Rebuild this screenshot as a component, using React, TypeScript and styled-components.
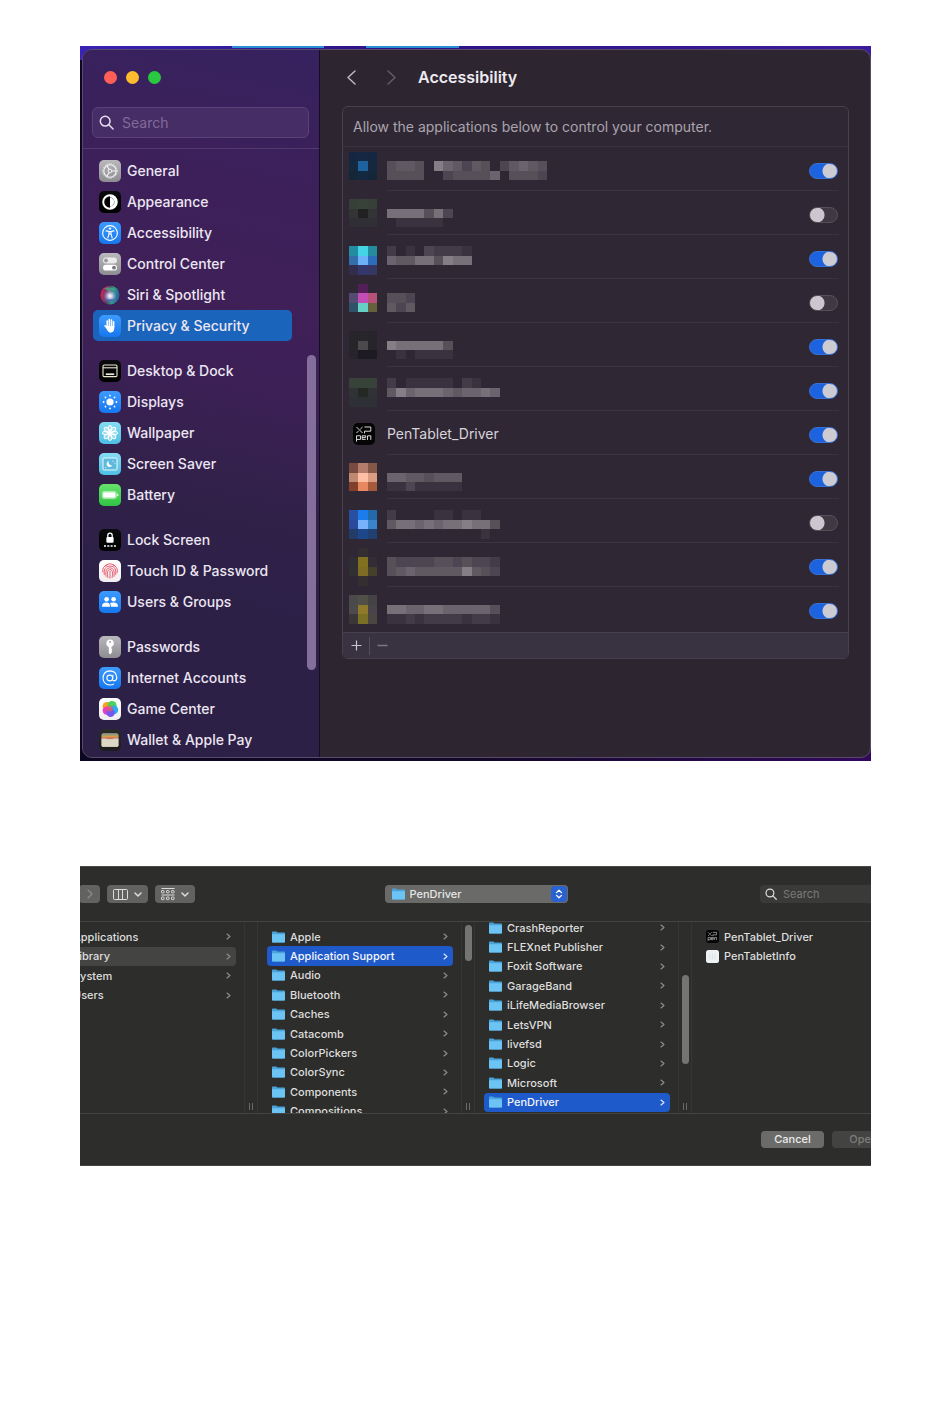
import React from "react";
import styled, { createGlobalStyle, css } from "styled-components";

const GlobalStyle = createGlobalStyle`
  *, *::before, *::after { box-sizing: border-box; }
  body {
    margin: 0;
    background: #fff;
    font-family: Inter, "Liberation Sans", sans-serif;
    -webkit-font-smoothing: antialiased;
  }
  button, input, select { font: inherit; color: inherit; }
  ul { list-style: none; margin: 0; padding: 0; }
`;

const Page = styled.main`
  padding: 46px 79px 253px 80px;
  display: flex;
  flex-direction: column;
  gap: 105px;
`;

/* ---------- System settings window ---------- */

const Desktop = styled.section`
  padding: 3px 0 3px 2px;
  background:
    linear-gradient(90deg, transparent 152px, #2a8fd0 152px 244px, transparent 244px 286px, #2a8fd0 286px 379px, transparent 379px) 0 0 / 100% 2px no-repeat,
    linear-gradient(90deg, #3a22b4, #2c1382 40%, #3c1c9c) 0 0 / 100% 14px no-repeat,
    linear-gradient(90deg, #0c0620, #120828 50%, #32085c);
`;

const SettingsWindow = styled.div`
  display: flex;
  border: 1px solid #594a6c;
  border-radius: 10px;
  overflow: hidden;
  background: #2d2631;
`;

const Sidebar = styled.aside`
  flex: none;
  width: 237px;
  border-right: 1px solid #150e22;
  background: linear-gradient(192deg, #36225f 0%, #3c205a 18%, #3f2058 34%, #3c2056 46%, #312149 62%, #2c2047 76%, #2d2046 100%);
`;

const TrafficLights = styled.div`
  display: flex;
  gap: 9px;
  padding: 21px 21px 23px;
`;

const Light = styled.button<{ $color: string }>`
  width: 13px;
  height: 13px;
  padding: 0;
  border: 0;
  border-radius: 50%;
  background: ${(p) => p.$color};
`;

const SidebarSearch = styled.label`
  display: flex;
  align-items: center;
  gap: 8px;
  height: 31px;
  margin: 0 10px 10px 9px;
  padding: 0 6px;
  border: 1px solid #584276;
  border-radius: 6px;
  background: #472d66;
  color: #e6dcf0;

  input {
    flex: 1;
    min-width: 0;
    padding: 0;
    border: 0;
    outline: 0;
    background: none;
    font-size: 14px;
  }
  input::placeholder { color: #806b98; opacity: 1; }
`;

const SidebarBody = styled.div`
  display: flex;
  border-top: 1px solid #513a6c;
  padding-top: 6px;
`;

const Nav = styled.nav`
  flex: 1;
  display: flex;
  flex-direction: column;
  gap: 14px;
  margin: 0 15px 2px 10px;
`;

const NavLink = styled.a<{ $active?: boolean }>`
  display: flex;
  align-items: center;
  gap: 6px;
  height: 31px;
  padding: 0 6px;
  border-radius: 5px;
  color: #ece6f2;
  font-size: 14px;
  font-weight: 500;
  white-space: nowrap;
  text-decoration: none;
  ${(p) => p.$active && css`background: #1a64bc;`}
`;

const SidebarThumb = styled.div`
  width: 9px;
  height: 315px;
  margin: 200px 3px 0 0;
  border-radius: 5px;
  background: #846e9c;
`;

const Pane = styled.section`
  flex: 1;
  min-width: 0;
  padding: 0 21px 0 22px;
`;

const PaneHeader = styled.header`
  display: flex;
  align-items: center;
  height: 54px;
  margin-bottom: 2px;
`;

const HistoryButton = styled.button<{ $dim?: boolean }>`
  display: grid;
  place-items: center;
  width: 18px;
  height: 24px;
  margin-right: 22px;
  padding: 0;
  border: 0;
  background: none;
  color: ${(p) => (p.$dim ? "#645d69" : "#bdb7c2")};
`;

const PaneTitle = styled.h1`
  margin: 0 0 0 -4px;
  color: #eeeaf1;
  font-size: 16px;
  font-weight: 600;
`;

const Card = styled.div`
  border: 1px solid #48414d;
  border-radius: 6px;
  overflow: hidden;
  background: #2f2834;
`;

const CardIntro = styled.p`
  display: flex;
  align-items: center;
  height: 40px;
  margin: 0;
  padding: 0 10px 1px;
  border-bottom: 1px solid #3a333f;
  color: #aaa4af;
  font-size: 14px;
`;

const AppList = styled.ul`
  padding-bottom: 1px;
`;

const AppRow = styled.li`
  display: flex;
  justify-content: space-between;
  height: 44px;
  margin: 0 9px 0 44px;
  border-bottom: 1px solid #3b3440;
  &:last-child { border-bottom-color: transparent; }
`;

const AppIdentity = styled.span`
  display: flex;
  align-items: center;
  gap: 12px;
  margin-left: -44px;
  padding: 2px 0 0 10px;
  color: #d8d3dc;
  font-size: 14px;
`;

const Mosaic = styled.svg`
  display: block;
  flex: none;
  margin-left: -44px;
`;

const Switch = styled.input`
  appearance: none;
  flex: none;
  width: 29px;
  height: 16px;
  margin: 16px 1px 0 0;
  border: 1px solid #55505a;
  border-radius: 8px;
  background: radial-gradient(circle at 7px 50%, #cdc6ce 7px, transparent 8px) #3f3944;
  &:checked {
    border-color: #3a70d0;
    background: radial-gradient(circle at 20px 50%, #cccbd2 7px, transparent 8px) #1d63e0;
  }
`;

const CardFooter = styled.div`
  display: flex;
  align-items: center;
  height: 26px;
  border-top: 1px solid #48414d;
  background: #393240;
`;

const FooterButton = styled.button<{ $dim?: boolean }>`
  display: grid;
  place-items: center;
  width: 26px;
  height: 18px;
  padding: 0;
  border: 0;
  background: none;
  color: ${(p) => (p.$dim ? "#7d7683" : "#c9c4cd")};
  & + & { border-left: 1px solid #544d5a; }
`;

/* ---------- Open dialog ---------- */

const DialogClip = styled.section`
  overflow: hidden;
  border-top: 1px solid #4b4b4a;
  border-bottom: 1px solid #454544;
  background: #2d2d2c;
  color: #dededd;
  font-size: 11px;
`;

/* The sheet is wider than its crop on both sides. */
const Sheet = styled.div`
  margin: 0 -40px 0 -39px;
`;

const Toolbar = styled.div`
  display: grid;
  grid-template-columns: 1fr 183px 1fr;
  align-items: center;
  height: 54px;
  padding: 0 16px;
`;

const ToolGroup = styled.div`
  display: flex;
  gap: 7px;
`;

const ToolButton = styled.button<{ $w: number }>`
  display: flex;
  align-items: center;
  justify-content: center;
  gap: 6px;
  width: ${(p) => p.$w}px;
  height: 18px;
  padding: 0;
  border: 0;
  border-radius: 4px;
  background: #626261;
  color: #dcdcdb;
`;

const NavPair = styled.div`
  display: flex;
  gap: 1px;
  color: #8d8d8c;
  button { color: inherit; }
`;

const PathPicker = styled.label`
  display: flex;
  align-items: center;
  gap: 5px;
  height: 18px;
  padding: 0 1px 0 7px;
  border-radius: 4px;
  background: #6a6a69;

  select {
    flex: 1;
    min-width: 0;
    appearance: none;
    padding: 0;
    border: 0;
    outline: 0;
    background: none;
    color: #e6e6e5;
    font-weight: 500;
  }
`;

const Stepper = styled.span`
  display: grid;
  place-items: center;
  width: 16px;
  height: 16px;
  border-radius: 4px;
  background: #2a62d2;
  color: #fff;
`;

const DialogSearch = styled.label`
  display: flex;
  align-items: center;
  justify-self: end;
  gap: 6px;
  width: 135px;
  height: 18px;
  padding: 0 5px;
  border-radius: 4px;
  background: #3a3a39;

  input {
    flex: 1;
    min-width: 0;
    padding: 0;
    border: 0;
    outline: 0;
    background: none;
  }
  input::placeholder { color: #7b7b7a; opacity: 1; }
`;

const Columns = styled.div`
  display: flex;
  height: 193px;
  overflow: hidden;
  border-top: 1px solid #444443;
  border-bottom: 1px solid #444443;
`;

const Column = styled.div<{ $last?: boolean }>`
  display: flex;
  flex: none;
  width: 217px;
  ${(p) => p.$last && css`flex: 1;`}
`;

const FileList = styled.ul<{ $height: number; $scrolled?: boolean }>`
  display: grid;
  grid-auto-rows: 1fr;
  flex: 1;
  align-self: flex-start;
  height: ${(p) => p.$height}px;
  margin: ${(p) => (p.$scrolled ? "-4px" : "5px")} 8px 0 9px;
`;

const FileRow = styled.li<{ $state?: "active" | "trail" }>`
  display: flex;
  align-items: center;
  gap: 5px;
  padding: 0 5px;
  border-radius: 4px;
  font-weight: 500;
  white-space: nowrap;
  color: #dededd;
  svg:last-child { margin-left: auto; color: #8f8f8e; }
  ${(p) => p.$state === "trail" && css`background: #444443;`}
  ${(p) =>
    p.$state === "active" &&
    css`
      background: #1f5acb;
      color: #f4f6fb;
      svg:last-child { color: #dfe8fa; }
    `}
`;

const Gutter = styled.div`
  display: flex;
  flex-direction: column;
  justify-content: space-between;
  align-items: center;
  width: 14px;
  padding-bottom: 3px;
  border-left: 1px solid #363635;
  border-right: 1px solid #363635;
  color: #6a6a69;
`;

const Thumb = styled.div<{ $top: number; $height: number }>`
  width: 7px;
  height: ${(p) => p.$height}px;
  margin-top: ${(p) => p.$top}px;
  border-radius: 4px;
  background: #747473;
`;

const DialogActions = styled.div`
  display: flex;
  justify-content: flex-end;
  gap: 8px;
  padding: 17px 16px;
`;

const ActionButton = styled.button`
  width: 63px;
  height: 17px;
  padding: 0;
  border: 0;
  border-radius: 4px;
  background: #6b6b6a;
  color: #ececeb;
  font-weight: 500;
  line-height: 17px;
  &:disabled { background: #434342; color: #7d7d7c; }
`;

/* ---------- Icons ---------- */

const Chevron = ({ w, h, left, down, stroke = 1.5 }: { w: number; h: number; left?: boolean; down?: boolean; stroke?: number }) => (
  <svg width={w} height={h} fill="none" stroke="currentColor" strokeWidth={stroke} strokeLinecap="round" strokeLinejoin="round" aria-hidden="true">
    {down ? (
      <path d={`M1 1L${w / 2} ${h - 1}L${w - 1} 1`} />
    ) : left ? (
      <path d={`M${w - 1} 1L1 ${h / 2}L${w - 1} ${h - 1}`} />
    ) : (
      <path d={`M1 1L${w - 1} ${h / 2}L1 ${h - 1}`} />
    )}
  </svg>
);

const Magnifier = ({ size }: { size: number }) => (
  <svg width={size} height={size} viewBox="0 0 16 16" fill="none" stroke="currentColor" strokeWidth="1.6" strokeLinecap="round" aria-hidden="true">
    <circle cx="6.6" cy="6.6" r="5.2" />
    <path d="M10.5 10.5L15 15" />
  </svg>
);

const Folder = () => (
  <svg width="13" height="12" viewBox="0 0 13 12" aria-hidden="true">
    <path d="M0 1.2Q0 .4 .8 .4H4.2L5.4 1.6H12.2Q13 1.6 13 2.4V10.8Q13 11.6 12.2 11.6H.8Q0 11.6 0 10.8Z" fill="#4aa3d8" />
    <path d="M0 3.2H13V10.8Q13 11.6 12.2 11.6H.8Q0 11.6 0 10.8Z" fill="#6cc4f4" />
  </svg>
);

const PenIcon = ({ size }: { size: number }) => (
  <svg width={size} height={size} viewBox="0 0 22 22" aria-hidden="true">
    <rect width="22" height="22" rx="5" fill="#050505" />
    <g fill="none" stroke="#e4e4e4" strokeWidth=".95">
      <path d="M3.5 4L9.5 10M9.5 4L7.3 6.2M5.7 7.8L3.5 10" />
      <path d="M11.5 4H17.8V8.2H11.5V10.4" />
      <path d="M3.5 18.6V12.8H7.5V16.4H3.5" />
      <path d="M9.2 14.6H12.7V12.8H9.2V16.4H12.7" />
      <path d="M14.5 16.9V12.8H17.8V16.9" />
    </g>
  </svg>
);

const DocIcon = () => (
  <svg width="13" height="13" aria-hidden="true">
    <rect width="13" height="13" rx="2.5" fill="#eef2f4" />
    <path d="M4 3.5V9.5M6.5 3.5V9.5M9 3.5V9.5" stroke="#dbe4e8" />
  </svg>
);

const GripLines = () => (
  <svg width="6" height="7" stroke="currentColor" aria-hidden="true">
    <path d="M1.5 0V7M4.5 0V7" />
  </svg>
);

const tiles: Record<string, [string, string]> = {
  grey: ["#b9b8bc", "#8d8c91"],
  black: ["#0b0a0c", "#000"],
  blue: ["#3d9bff", "#1677ee"],
  cyan: ["#86dcf2", "#4dbfe4"],
  green: ["#67e26c", "#30c444"],
  white: ["#fff", "#f0eef0"],
  dark: ["#2a2a2a", "#1c1c1c"],
  none: ["transparent", "transparent"],
};

const TileSvg = styled.svg`
  flex: none;
  overflow: visible;
`;

const Tile = ({ id, tone, children }: { id: string; tone: string; children: React.ReactNode }) => (
  <TileSvg width="22" height="22" viewBox="0 0 22 22" fill="none" stroke="none" aria-hidden="true">
    <defs>
      <linearGradient id={`t-${id}`} x1="0" y1="0" x2="0" y2="1">
        <stop stopColor={tiles[tone][0]} />
        <stop offset="1" stopColor={tiles[tone][1]} />
      </linearGradient>
    </defs>
    <rect width="22" height="22" rx="5" fill={`url(#t-${id})`} />
    {children}
  </TileSvg>
);

const spokes = (n: number) => Array.from({ length: n }, (_, i) => (360 / n) * i);

const glyphs: Record<string, [string, React.ReactNode]> = {
  general: ["grey", (
    <g stroke="#f2f2f4">
      <circle cx="11" cy="11" r="6.2" strokeWidth="1.1" />
      <circle cx="11" cy="11" r="7.2" strokeWidth="1" strokeDasharray="1.2 1.1" />
      <circle cx="11" cy="11" r="1.8" />
      <path d="M13 11H17.2M10 9.3L7.9 5.7M10 12.7L7.9 16.3" strokeWidth="1.2" />
    </g>
  )],
  appearance: ["black", (
    <>
      <circle cx="11" cy="11" r="6.8" stroke="#fff" strokeWidth="2" />
      <path d="M11 4A7 7 0 0 1 11 18V15.4A4.4 4.4 0 0 0 11 6.6Z" fill="#fff" />
      <path d="M11 6.8A4.2 4.2 0 0 0 11 15.2Z" fill="#000" />
      <path d="M11 6.8A4.2 4.2 0 0 1 11 15.2Z" fill="#fff" />
    </>
  )],
  accessibility: ["blue", (
    <>
      <circle cx="11" cy="11" r="7.4" stroke="#fff" strokeWidth="1.1" />
      <circle cx="11" cy="6.6" r="1.2" fill="#fff" />
      <path d="M7 8.9L10 9.5V12L8.8 16M15 8.9L12 9.5V12L13.2 16M10 9.6H12M10 12H12" stroke="#fff" strokeWidth="1.1" strokeLinecap="round" />
    </>
  )],
  control: ["grey", (
    <>
      <rect x="4" y="4.6" width="14" height="5.8" rx="2.9" fill="#fff" opacity=".75" />
      <circle cx="7" cy="7.5" r="1.9" fill="#98979c" />
      <rect x="4" y="11.8" width="14" height="5.8" rx="2.9" fill="#fff" />
      <circle cx="15" cy="14.7" r="1.9" fill="#77767b" />
    </>
  )],
  siri: ["none", (
    <>
      <defs>
        <radialGradient id="siri-core">
          <stop stopColor="#fff" />
          <stop offset=".35" stopColor="#d9d4f2" stopOpacity=".85" />
          <stop offset="1" stopColor="#6a7cc0" stopOpacity="0" />
        </radialGradient>
        <linearGradient id="siri-ring" x1="0" y1=".4" x2="1" y2=".6">
          <stop stopColor="#d02455" />
          <stop offset=".4" stopColor="#5f3f66" />
          <stop offset=".65" stopColor="#2f9a88" />
          <stop offset="1" stopColor="#2c58a8" />
        </linearGradient>
      </defs>
      <circle cx="11" cy="11" r="10.2" fill="#3a1c4a" />
      <circle cx="11" cy="11" r="9.6" fill="url(#siri-ring)" />
      <path d="M4 5Q11 1 17 6Q12 5 10 8Q6 4 4 5Z" fill="#49b58c" opacity=".7" />
      <circle cx="11" cy="12" r="7" fill="url(#siri-core)" />
      <path d="M5 15.5Q11 19.5 17 15Q12 15 5 15.5Z" fill="#4667bb" opacity=".8" />
    </>
  )],
  privacy: ["blue", (
    <g stroke="#fff" strokeLinecap="round" strokeWidth="1.6">
      <path d="M8.2 12V6M10.3 11V4.6M12.5 11V5M14.6 12V6.8M8.2 13.2L6 10.8" />
      <path d="M8 11.5H14.8V13.6Q14.8 17.2 11.6 17.2Q9.4 17.2 8.2 14.4Z" fill="#fff" strokeWidth="1" />
    </g>
  )],
  desktop: ["black", (
    <g stroke="#e9e8d2" strokeWidth="1.1">
      <rect x="4" y="5" width="14" height="11.6" rx="1.2" />
      <path d="M4 7.8H18" />
      <path d="M6.8 14.2H15.2" strokeWidth="1.7" />
    </g>
  )],
  displays: ["blue", (
    <g fill="#fff">
      <circle cx="11" cy="11" r="3.6" />
      {spokes(8).map((a) => <circle key={a} cx="11" cy="4.6" r=".9" transform={`rotate(${a} 11 11)`} />)}
    </g>
  )],
  wallpaper: ["cyan", (
    <g stroke="#fff" strokeWidth="1" fill="#fff" fillOpacity=".35">
      {spokes(8).map((a) => <ellipse key={a} cx="11" cy="6.4" rx="1.9" ry="2.9" transform={`rotate(${a} 11 11)`} />)}
      <circle cx="11" cy="11" r="1.6" fillOpacity="1" />
    </g>
  )],
  saver: ["cyan", (
    <>
      <rect x="4" y="5" width="14" height="12" rx="1" fill="#5fb9dc" stroke="#e8fafd" strokeWidth="1" />
      <path d="M9.6 8A3.1 3.1 0 1 0 13.4 12.4A3.4 3.4 0 0 1 9.6 8Z" fill="#fff" />
      <path d="M13.5 8.2H14.5M15.5 10.4H16.3M6.3 14.6H7.2" stroke="#fff" />
    </>
  )],
  battery: ["green", (
    <>
      <rect x="3.2" y="7.4" width="14.2" height="7.2" rx="2" stroke="#d8fbd8" strokeWidth=".7" />
      <rect x="4" y="8.2" width="12.6" height="5.6" rx="1.2" fill="#fff" />
      <path d="M18.6 9.8Q19.8 11 18.6 12.2Z" fill="#fff" stroke="#fff" strokeWidth=".6" />
    </>
  )],
  lock: ["black", (
    <>
      <rect x="7.4" y="8" width="7.2" height="5.8" rx="1" fill="#fff" />
      <path d="M8.8 8.4V6.4A2.2 2.2 0 0 1 13.2 6.4V8.4" stroke="#fff" strokeWidth="1.3" />
      <path d="M5 17H7M8.3 17H10.3M11.6 17H13.6M14.9 17H16.9" stroke="#fff" strokeWidth="1.5" />
    </>
  )],
  touch: ["white", (
    <g stroke="#e8596b" strokeWidth=".95" strokeLinecap="round">
      <path d="M5.4 6.4Q11 .8 16.6 6.4" />
      <path d="M3.8 12Q3 6.2 8 4.9M18.2 12.6Q19.4 6.6 14 4.9" />
      <path d="M5.2 14.6Q4.2 6 11 6Q17.8 6 16.8 14.6" />
      <path d="M7 16.4Q5.6 7.8 11 7.8Q16.4 7.8 15 16.4" />
      <path d="M8.9 17.6Q7.2 9.6 11 9.6Q14.8 9.6 13.1 17.6" />
      <path d="M11 11.4V18.2" />
    </g>
  )],
  users: ["blue", (
    <g fill="#fff">
      <circle cx="7.6" cy="8.2" r="2.3" />
      <circle cx="14.6" cy="8.2" r="2.3" />
      <path d="M3 15.8Q3 11.6 7.4 11.6Q11 11.6 11 15.8Z" />
      <path d="M11.9 15.8Q11.9 13 10.9 12.2Q12.2 11.6 14.6 11.6Q19 11.6 19 15.8Z" />
    </g>
  )],
  passwords: ["grey", (
    <g fill="#fff">
      <path fillRule="evenodd" d="M11 3.4A3.9 3.9 0 0 1 12.4 10.9V12.4L13.4 13.4L12.4 14.4L13.4 15.5L11.2 18.4L9.8 17V10.9A3.9 3.9 0 0 1 11 3.4ZM11 4.9A1.1 1.1 0 1 0 11 7.1A1.1 1.1 0 1 0 11 4.9Z" />
    </g>
  )],
  internet: ["blue", (
    <g stroke="#fff" strokeWidth="1.1" strokeLinecap="round">
      <circle cx="10.8" cy="11" r="2.9" />
      <path d="M13.9 8.2L13.5 12.2Q13.6 13.9 15 13.9Q17.8 13.6 17.8 10.6Q17.2 4 11 3.9Q4.4 4.2 4 11Q4.4 17.7 11 18Q13.2 18 14.6 17.1" />
    </g>
  )],
  game: ["white", (
    <>
      <circle cx="8" cy="8.4" r="4.4" fill="#f9a01f" />
      <circle cx="13" cy="7.6" r="4.6" fill="#4bd257" />
      <circle cx="7.8" cy="12.6" r="4.2" fill="#e93fc4" />
      <circle cx="14.8" cy="11.8" r="4.4" fill="#27aef1" />
      <circle cx="11.6" cy="14.8" r="4.2" fill="#7657ee" />
      <circle cx="10.8" cy="10.6" r="3" fill="#ef5a5f" opacity=".7" />
    </>
  )],
  wallet: ["dark", (
    <>
      <rect x="2.6" y="4.4" width="16.8" height="13.4" rx="1.6" fill="#d9d2bd" />
      <path d="M3 4.8H19V7H3Z" fill="#8d9c86" />
      <path d="M3 6.6H19V8.4H3Z" fill="#d99c3e" />
      <path d="M3 8.2H19V10H3Z" fill="#ce6d5b" />
      <path d="M2.6 9.4H7.6Q8.2 12 11 12Q13.8 12 14.4 9.4H19.4V16.2Q19.4 17.8 17.8 17.8H4.2Q2.6 17.8 2.6 16.2Z" fill="#dcd6c4" />
    </>
  )],
};

/* ---------- Data ---------- */

const navGroups: [string, string][][] = [
  [["general", "General"], ["appearance", "Appearance"], ["accessibility", "Accessibility"], ["control", "Control Center"], ["siri", "Siri & Spotlight"], ["privacy", "Privacy & Security"]],
  [["desktop", "Desktop & Dock"], ["displays", "Displays"], ["wallpaper", "Wallpaper"], ["saver", "Screen Saver"], ["battery", "Battery"]],
  [["lock", "Lock Screen"], ["touch", "Touch ID & Password"], ["users", "Users & Groups"]],
  [["passwords", "Passwords"], ["internet", "Internet Accounts"], ["game", "Game Center"], ["wallet", "Wallet & Apple Pay"]],
];

type MaskedApp = {
  on: boolean;
  /* Mosaic line, counted from the top of the list, on which icon and name start. */
  iconLine: number;
  icon: string[][];
  nameLine: number;
  /* One digit per cell: 0 is the card colour, 9 the lightest grey. */
  name: string[];
};
type NamedApp = { on: boolean; title: string };

const _ = "";
const apps: (MaskedApp | NamedApp)[] = [
  { on: true, iconLine: 0, nameLine: 1, icon: [["#152640", "#152843", "#152640"], ["#14283f", "#1d639d", "#14283f"], ["#132739", "#13293f", "#132739"]], name: ["45540865354035654", "44440034444604443"] },
  { on: false, iconLine: 5, nameLine: 6, icon: [["#374038", "#374239", "#374038"], ["#323435", "#202120", "#323435"], ["#302f36", "#302f36", "#302f36"]], name: ["7777473", "0111110"] },
  { on: true, iconLine: 10, nameLine: 10, icon: [["#228ca2", "#45d4e6", "#258c9e"], ["#336fab", "#6eb0f8", "#2b6dba"], ["#302d4d", "#34366c", "#343664"]], name: ["201032221", "655774877"] },
  { on: false, iconLine: 14, nameLine: 15, icon: [[_, "#541e59", _], ["#554b72", "#c24db4", "#b65278"], ["#2f5268", "#65d1c5", "#65613d"]], name: ["443", "535"] },
  { on: true, iconLine: 19, nameLine: 20, icon: [["#28242b", "#29262b", "#28242b"], ["#272529", "#4a494b", "#272529"], ["#28242b", "#1e1a23", "#1e1a23"]], name: ["8777774", "0101111"] },
  { on: true, iconLine: 24, nameLine: 24, icon: [["#374339", "#374339", "#374339"], ["#303235", "#252926", "#303235"], ["#2f3036", "#2f3036", "#2f3036"]], name: ["201111102100", "586777656676"] },
  { on: true, title: "PenTablet_Driver" },
  { on: true, iconLine: 33, nameLine: 34, icon: [["#7a4a40", "#b47c6a", "#845747"], ["#bd8970", "#ffbfa5", "#db9d82"], ["#823f2c", "#e78860", "#a65a3c"]], name: ["66554555", "11311111"] },
  { on: false, iconLine: 38, nameLine: 38, icon: [["#2750a3", "#1d7ceb", "#226aab"], ["#28499c", "#78b2fd", "#3985cb"], ["#223b68", "#1e478b", "#1f4070"]], name: ["200001101100", "577676778774", "000000000010"] },
  { on: true, iconLine: 42, nameLine: 43, icon: [[_, "#342d31", _], ["#302e32", "#817020", "#322d34"], ["#302f32", "#7e6b24", "#44402b"], [_, "#352e31", _]], name: ["433334434332", "456555558543"] },
  { on: true, iconLine: 47, nameLine: 48, icon: [["#4c494b", "#504f48", "#454246"], ["#4d4a4b", "#8f7a2c", "#49444a"], ["#3b3739", "#797025", "#4b4642"]], name: ["776677666664", "112122221221"] },
];

const greys = ["none", "#3a333f", "#433c48", "#4d4652", "#575058", "#605962", "#6b646e", "#787079", "#857e87", "#938b92"];
const CELL = 9.43;
const ROW = 44;

const MosaicRow = ({ app, index }: { app: MaskedApp; index: number }) => {
  const lineY = (line: number) => Math.round(5 + line * CELL - index * ROW);
  const cellX = (col: number) => Math.round(6 + col * CELL);
  const cell = (col: number, line: number, fill: string) => {
    const x = cellX(col);
    const y = lineY(line);
    return <rect key={`${col}-${line}`} x={x} y={y} width={cellX(col + 1) - x} height={lineY(line + 1) - y} fill={fill} />;
  };
  return (
    <Mosaic width="220" height={ROW} role="img" aria-label="Masked application">
      {app.icon.flatMap((line, r) => line.map((fill, c) => cell(c, app.iconLine + r, fill || "none")))}
      {app.name.flatMap((line, r) => [...line].map((d, c) => cell(c + 4, app.nameLine + r, greys[+d])))}
    </Mosaic>
  );
};

type Entry = { name: string; state?: "active" | "trail"; icon?: React.ReactNode; leaf?: boolean };
const entries = (...names: string[]): Entry[] => names.map((name) => ({ name }));
const mark = (list: Entry[], name: string, state: "active" | "trail") => list.map((e) => (e.name === name ? { ...e, state } : e));

const rootFolders = mark(entries("Applications", "Library", "System", "Users"), "Library", "trail");
const libraryFolders = mark(
  entries("Apple", "Application Support", "Audio", "Bluetooth", "Caches", "Catacomb", "ColorPickers", "ColorSync", "Components", "Compositions"),
  "Application Support",
  "active",
);
const supportFolders = mark(
  entries("CrashReporter", "FLEXnet Publisher", "Foxit Software", "GarageBand", "iLifeMediaBrowser", "LetsVPN", "livefsd", "Logic", "Microsoft", "PenDriver"),
  "PenDriver",
  "active",
);
const driverFiles: Entry[] = [
  { name: "PenTablet_Driver", icon: <PenIcon size={13} />, leaf: true },
  { name: "PenTabletInfo", icon: <DocIcon />, leaf: true },
];

const Files = ({ items, height, scrolled }: { items: Entry[]; height: number; scrolled?: boolean }) => (
  <FileList $height={height} $scrolled={scrolled}>
    {items.map((e) => (
      <FileRow key={e.name} $state={e.state}>
        {e.icon ?? <Folder />}
        <span>{e.name}</span>
        {!e.leaf && <Chevron w={5} h={7} stroke={1.1} />}
      </FileRow>
    ))}
  </FileList>
);

/* ---------- Page ---------- */

export default function App() {
  return (
    <>
      <GlobalStyle />
      <Page>
        <Desktop>
          <SettingsWindow>
            <Sidebar>
              <TrafficLights>
                <Light $color="#ff5f57" aria-label="Close" />
                <Light $color="#febc2e" aria-label="Minimize" />
                <Light $color="#28c840" aria-label="Zoom" />
              </TrafficLights>
              <SidebarSearch>
                <Magnifier size={15} />
                <input type="text" placeholder="Search" aria-label="Search settings" />
              </SidebarSearch>
              <SidebarBody>
                <Nav aria-label="Settings">
                  {navGroups.map((group) => (
                    <ul key={group[0][0]}>
                      {group.map(([id, label]) => (
                        <li key={id}>
                          <NavLink href={`#${id}`} $active={id === "privacy"}>
                            <Tile id={id} tone={glyphs[id][0]}>{glyphs[id][1]}</Tile>
                            {label}
                          </NavLink>
                        </li>
                      ))}
                    </ul>
                  ))}
                </Nav>
                <SidebarThumb />
              </SidebarBody>
            </Sidebar>
            <Pane>
              <PaneHeader>
                <HistoryButton aria-label="Back"><Chevron w={9} h={15} left /></HistoryButton>
                <HistoryButton aria-label="Forward" $dim><Chevron w={9} h={15} /></HistoryButton>
                <PaneTitle>Accessibility</PaneTitle>
              </PaneHeader>
              <Card>
                <CardIntro>Allow the applications below to control your computer.</CardIntro>
                <AppList>
                  {apps.map((app, i) => (
                    <AppRow key={i}>
                      {"title" in app ? (
                        <AppIdentity>
                          <PenIcon size={22} />
                          {app.title}
                        </AppIdentity>
                      ) : (
                        <MosaicRow app={app} index={i} />
                      )}
                      <Switch type="checkbox" role="switch" defaultChecked={app.on} aria-label={"title" in app ? app.title : `Masked application ${i + 1}`} />
                    </AppRow>
                  ))}
                </AppList>
                <CardFooter>
                  <FooterButton aria-label="Add application">
                    <svg width="11" height="11" stroke="currentColor" strokeWidth="1.2" aria-hidden="true"><path d="M5.5 .5V10.5M.5 5.5H10.5" /></svg>
                  </FooterButton>
                  <FooterButton aria-label="Remove application" $dim>
                    <svg width="11" height="11" stroke="currentColor" strokeWidth="1.3" aria-hidden="true"><path d="M.5 5.5H10.5" /></svg>
                  </FooterButton>
                </CardFooter>
              </Card>
            </Pane>
          </SettingsWindow>
        </Desktop>

        <DialogClip>
          <Sheet>
            <Toolbar>
              <ToolGroup>
                <NavPair>
                  <ToolButton $w={21} aria-label="Back"><Chevron w={6} h={10} left stroke={1.1} /></ToolButton>
                  <ToolButton $w={21} aria-label="Forward"><Chevron w={6} h={10} stroke={1.1} /></ToolButton>
                </NavPair>
                <ToolButton $w={41} aria-label="Column view">
                  <svg width="15" height="11" fill="none" stroke="currentColor" aria-hidden="true">
                    <rect x=".5" y=".5" width="14" height="10" rx="1" />
                    <path d="M5.5 .5V10.5M9.5 .5V10.5" />
                  </svg>
                  <Chevron w={8} h={5} down />
                </ToolButton>
                <ToolButton $w={40} aria-label="Group items">
                  <svg width="14" height="13" fill="none" stroke="currentColor" aria-hidden="true">
                    <path d="M.5 .5H13.5M.5 7H13.5" />
                    {[0, 5, 10].map((x) => (
                      <g key={x}>
                        <rect x={x + 0.5} y="2.5" width="2.6" height="2.4" rx=".6" />
                        <rect x={x + 0.5} y="9" width="2.6" height="2.6" rx=".6" />
                      </g>
                    ))}
                  </svg>
                  <Chevron w={8} h={5} down />
                </ToolButton>
              </ToolGroup>
              <PathPicker>
                <Folder />
                <select defaultValue="PenDriver" aria-label="Current folder">
                  <option>PenDriver</option>
                </select>
                <Stepper>
                  <svg width="8" height="10" fill="none" stroke="currentColor" strokeWidth="1.3" strokeLinecap="round" strokeLinejoin="round" aria-hidden="true">
                    <path d="M1.5 3.6L4 1.2L6.5 3.6M1.5 6.4L4 8.8L6.5 6.4" />
                  </svg>
                </Stepper>
              </PathPicker>
              <DialogSearch>
                <Magnifier size={12} />
                <input type="text" placeholder="Search" aria-label="Search files" />
              </DialogSearch>
            </Toolbar>
            <Columns>
              <Column>
                <Files items={rootFolders} height={78} />
                <Gutter><span /><GripLines /></Gutter>
              </Column>
              <Column>
                <Files items={libraryFolders} height={194} />
                <Gutter><Thumb $top={3} $height={36} /><GripLines /></Gutter>
              </Column>
              <Column>
                <Files items={supportFolders} height={194} scrolled />
                <Gutter><Thumb $top={53} $height={89} /><GripLines /></Gutter>
              </Column>
              <Column $last>
                <Files items={driverFiles} height={39} />
              </Column>
            </Columns>
            <DialogActions>
              <ActionButton>Cancel</ActionButton>
              <ActionButton disabled>Open</ActionButton>
            </DialogActions>
          </Sheet>
        </DialogClip>
      </Page>
    </>
  );
}
